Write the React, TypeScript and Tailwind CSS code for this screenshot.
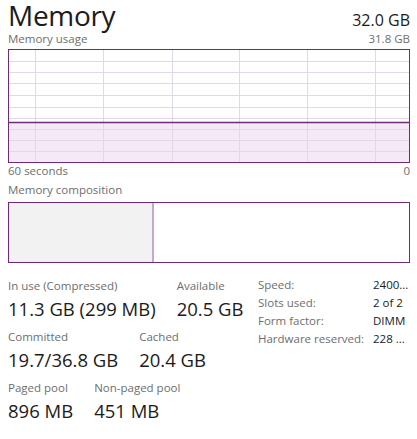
import React from "react";

const vLines = [26, 94, 163, 230, 298, 366];
const hLines = [11, 22, 33, 45, 57, 68, 79, 90, 101];

function UsageChart() {
  return (
    <svg width="400" height="112" viewBox="0 0 400 112" className="block">
      <rect x="0" y="72" width="400" height="40" fill="#f5e9f7" />
      {hLines.map((y) => (
        <line key={"h" + y} x1="0" x2="400" y1={y + 0.5} y2={y + 0.5} stroke="#e3d8e5" strokeWidth="1" />
      ))}
      {vLines.map((x) => (
        <line key={"v" + x} x1={x + 0.5} x2={x + 0.5} y1="0" y2="112" stroke="#e3d8e5" strokeWidth="1" />
      ))}
      <line x1="0" x2="400" y1="72.5" y2="72.5" stroke="#6f2b7a" strokeWidth="1.5" />
    </svg>
  );
}

function Stat({ label, value }: { label: string; value: string }) {
  return (
    <div className="flex flex-col">
      <div className="text-[11.5px] leading-[16px] text-[#6e6e6e]">{label}</div>
      <div className="mt-[3px] text-[18.5px] leading-[24px] text-[#1b1b1b]">{value}</div>
    </div>
  );
}

export default function App() {
  return (
    <div className="w-[417px] h-[439px] bg-white pl-2 pr-[7px] font-['Open_Sans',sans-serif] overflow-hidden">
      <div className="flex justify-between items-baseline h-[31px]">
        <div className="text-[28px] leading-[31px] tracking-[-0.3px] text-[#1b1b1b]">Memory</div>
        <div className="text-[16px] leading-[20px] text-[#1b1b1b]">32.0 GB</div>
      </div>
      <div className="flex justify-between text-[11.5px] leading-[16px] text-[#6e6e6e]">
        <span>Memory usage</span>
        <span>31.8 GB</span>
      </div>
      <div className="mt-[2px] h-[114px] border border-[#6f2b7a] bg-white">
        <UsageChart />
      </div>
      <div className="flex justify-between text-[11.5px] leading-[16px] text-[#6e6e6e]">
        <span>60 seconds</span>
        <span>0</span>
      </div>
      <div className="mt-[3px] text-[11.5px] leading-[16px] text-[#6e6e6e]">Memory composition</div>
      <div className="mt-[4px] h-[61px] border border-[#6f2b7a] flex">
        <div className="w-[143px] bg-[#f2f2f2] border-l border-t border-b border-[#f3e4f5]" />
        <div className="w-[2px] bg-[#c9a6d0]" />
        <div className="flex-1 bg-white" />
      </div>
      <div className="mt-[13px] flex items-start">
        <div className="w-[250px] pt-[2px] flex flex-col gap-[8px]">
          <div className="flex gap-[21px]">
            <Stat label="In use (Compressed)" value="11.3 GB (299 MB)" />
            <Stat label="Available" value="20.5 GB" />
          </div>
          <div className="flex gap-[21px]">
            <Stat label="Committed" value="19.7/36.8 GB" />
            <Stat label="Cached" value="20.4 GB" />
          </div>
          <div className="flex gap-[21px]">
            <Stat label="Paged pool" value="896 MB" />
            <Stat label="Non-paged pool" value="451 MB" />
          </div>
        </div>
        <div className="grid grid-cols-[115px_1fr] content-start text-[11.5px] leading-[18px]">
          <span className="text-[#6e6e6e]">Speed:</span>
          <span className="text-[#1b1b1b]">2400...</span>
          <span className="text-[#6e6e6e]">Slots used:</span>
          <span className="text-[#1b1b1b]">2 of 2</span>
          <span className="text-[#6e6e6e]">Form factor:</span>
          <span className="text-[#1b1b1b]">DIMM</span>
          <span className="text-[#6e6e6e]">Hardware reserved:</span>
          <span className="text-[#1b1b1b]">228 ...</span>
        </div>
      </div>
    </div>
  );
}
